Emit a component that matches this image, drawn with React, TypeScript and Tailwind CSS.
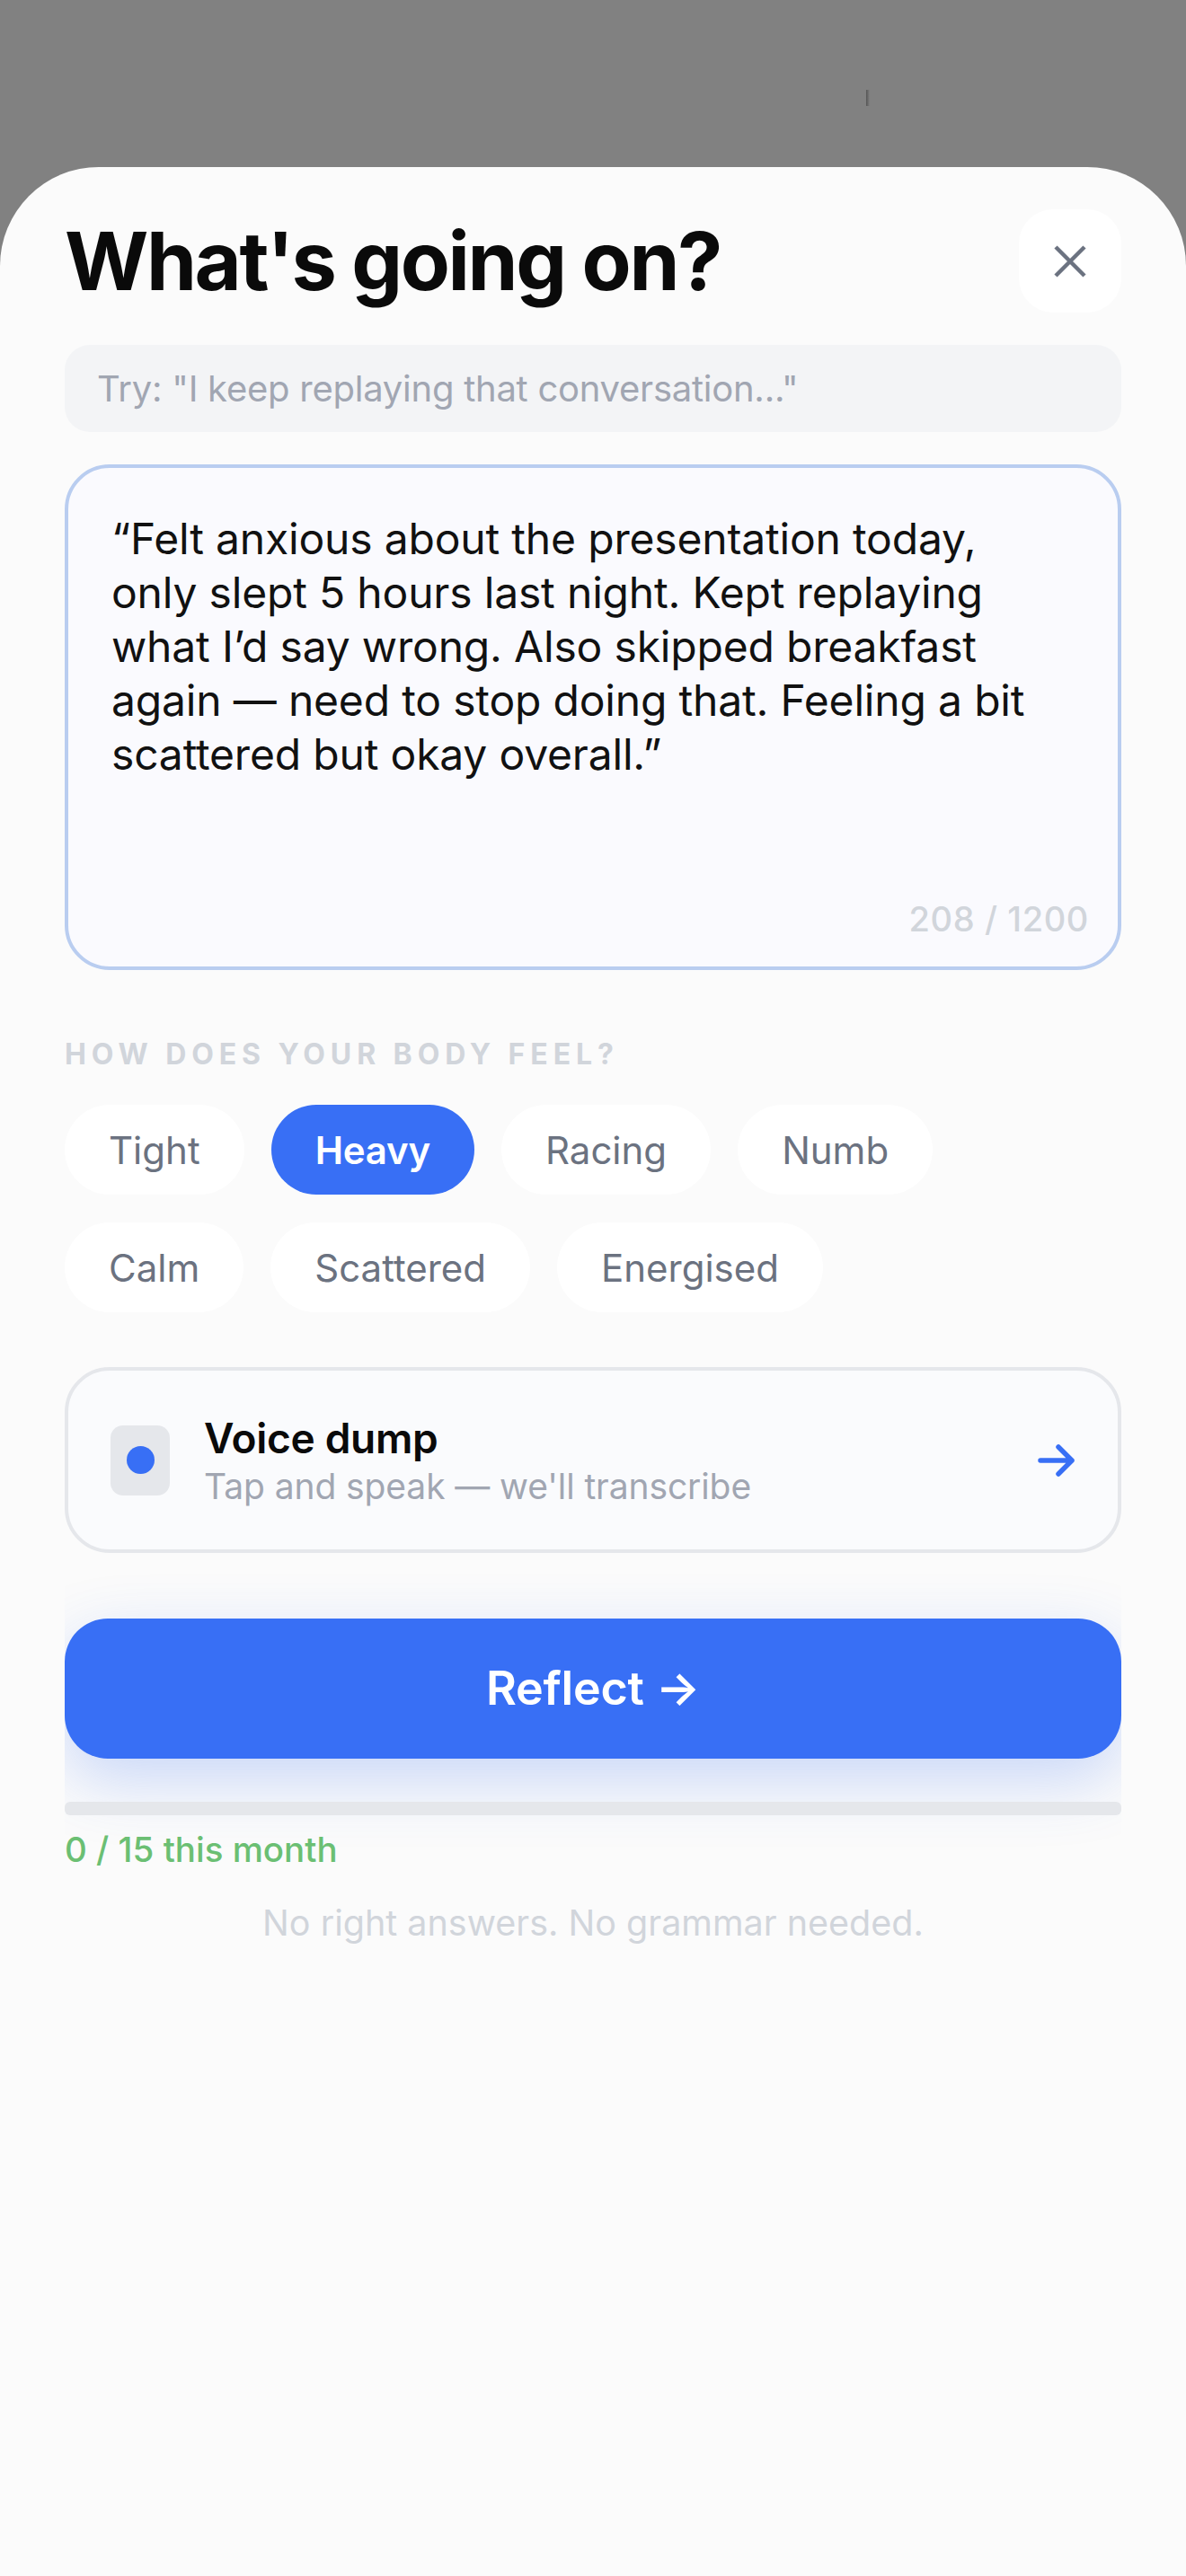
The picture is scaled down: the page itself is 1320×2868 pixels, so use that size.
const row1 = ["Tight", "Heavy", "Racing", "Numb"];
const row2 = ["Calm", "Scattered", "Energised"];

function Chip({ label }: { label: string }) {
  const active = label === "Heavy";
  return (
    <div
      className={
        active
          ? "flex h-[100px] items-center rounded-[50px] bg-[#386ff5] px-[49px] text-[42px] font-semibold tracking-[-0.2px] text-white"
          : "flex h-[100px] items-center rounded-[50px] bg-white px-[49px] text-[42px] text-[#6b7280]"
      }
    >
      {label}
    </div>
  );
}

export default function App() {
  return (
    <div className="relative h-[2868px] w-[1320px] overflow-hidden bg-[#818181] font-['Inter',sans-serif]">
      <div className="absolute left-[964px] top-[100px] h-[18px] w-[4px] bg-gradient-to-r from-[#555555] to-[#818181]" />
      <div className="h-[186px]" />
      <div className="h-[2682px] rounded-t-[110px] bg-[#fbfbfb] px-[72px] pt-[47px]">
        <div className="flex items-center justify-between">
          <h1 className="text-[90px] leading-[115px] font-bold tracking-[-2.4px] text-[#0a0a0a]">
            What's going on?
          </h1>
          <button className="flex h-[115px] w-[114px] items-center justify-center rounded-[38px] bg-white">
            <svg width="36" height="36" viewBox="0 0 36 36" fill="none" stroke="#6b7280" strokeWidth="4.5">
              <path d="M2 2 L34 34 M34 2 L2 34" />
            </svg>
          </button>
        </div>

        <div className="mt-[36px] flex h-[97px] items-center rounded-[28px] bg-[#f3f4f6] px-[36px] text-[40px] tracking-[-0.25px] text-[#a1a6b2]">
          Try: "I keep replaying that conversation..."
        </div>

        <div className="mt-[36px] flex h-[563px] flex-col rounded-[50px] border-[4px] border-[#b9cdf0] bg-[#fafafe] pb-[24px] pl-[48px] pr-[32px] pt-[49px]">
          <p className="whitespace-nowrap text-[48px] leading-[60px] tracking-[-0.18px] text-[#111111]">
            “Felt anxious about the presentation today,
            <br />
            only slept 5 hours last night. Kept replaying
            <br />
            what I’d say wrong. Also skipped breakfast
            <br />
            again — need to stop doing that. Feeling a bit
            <br />
            scattered but okay overall.”
          </p>
          <span className="mt-auto self-end text-[38px] font-medium tracking-[0.6px] text-[#d1d5db]">208 / 1200</span>
        </div>

        <div className="mt-[74px] text-[32px] leading-[40px] font-bold tracking-[5.9px] text-[#d1d5db]">
          HOW DOES YOUR BODY FEEL?
        </div>

        <div className="mt-[36px] flex gap-[30px]">
          {row1.map((label) => (
            <Chip key={label} label={label} />
          ))}
        </div>
        <div className="mt-[31px] flex gap-[30px]">
          {row2.map((label) => (
            <Chip key={label} label={label} />
          ))}
        </div>

        <div className="mt-[61px] flex h-[207px] items-center rounded-[50px] border-[4px] border-[#e5e7eb] bg-[#fafbfd] pl-[47px] pr-[47px]">
          <div className="flex h-[78px] w-[66px] items-center justify-center rounded-[14px] bg-[#e5e7eb]">
            <div className="h-[31px] w-[31px] rounded-full bg-[#386ff5]" />
          </div>
          <div className="ml-[38px] pt-[3px]">
            <div className="text-[46px] leading-[54px] font-semibold tracking-[-0.3px] text-[#0a0a0a]">Voice dump</div>
            <div className="text-[39px] leading-[53px] tracking-[-0.1px] text-[#a1a6b2]">Tap and speak — we'll transcribe</div>
          </div>
          <svg className="ml-auto" width="42" height="36" viewBox="0 0 42 36" fill="none" stroke="#386ff5" strokeWidth="5.5" strokeLinecap="round" strokeLinejoin="round">
            <path d="M3 18 H38 M23 3 L38 18 L23 33" />
          </svg>
        </div>

        <div className="overflow-hidden pb-[6px] pt-[73px]">
          <button className="flex h-[156px] w-full items-center justify-center rounded-[48px] bg-[#386ff5] text-[52px] font-semibold tracking-[-0.2px] text-white shadow-[0_24px_70px_rgba(56,111,245,0.25)]">
            Reflect →
          </button>
          <div className="mt-[48px] h-[15px] rounded-[6px] bg-[#e5e7eb]" />
          <div className="mt-[15px] text-[38.5px] leading-[46px] font-medium text-[#6bbf73]">0 / 15 this month</div>
        </div>

        <div className="mt-[30px] text-center text-[39.5px] leading-[46px] text-[#d1d5db]">
          No right answers. No grammar needed.
        </div>
      </div>
    </div>
  );
}
